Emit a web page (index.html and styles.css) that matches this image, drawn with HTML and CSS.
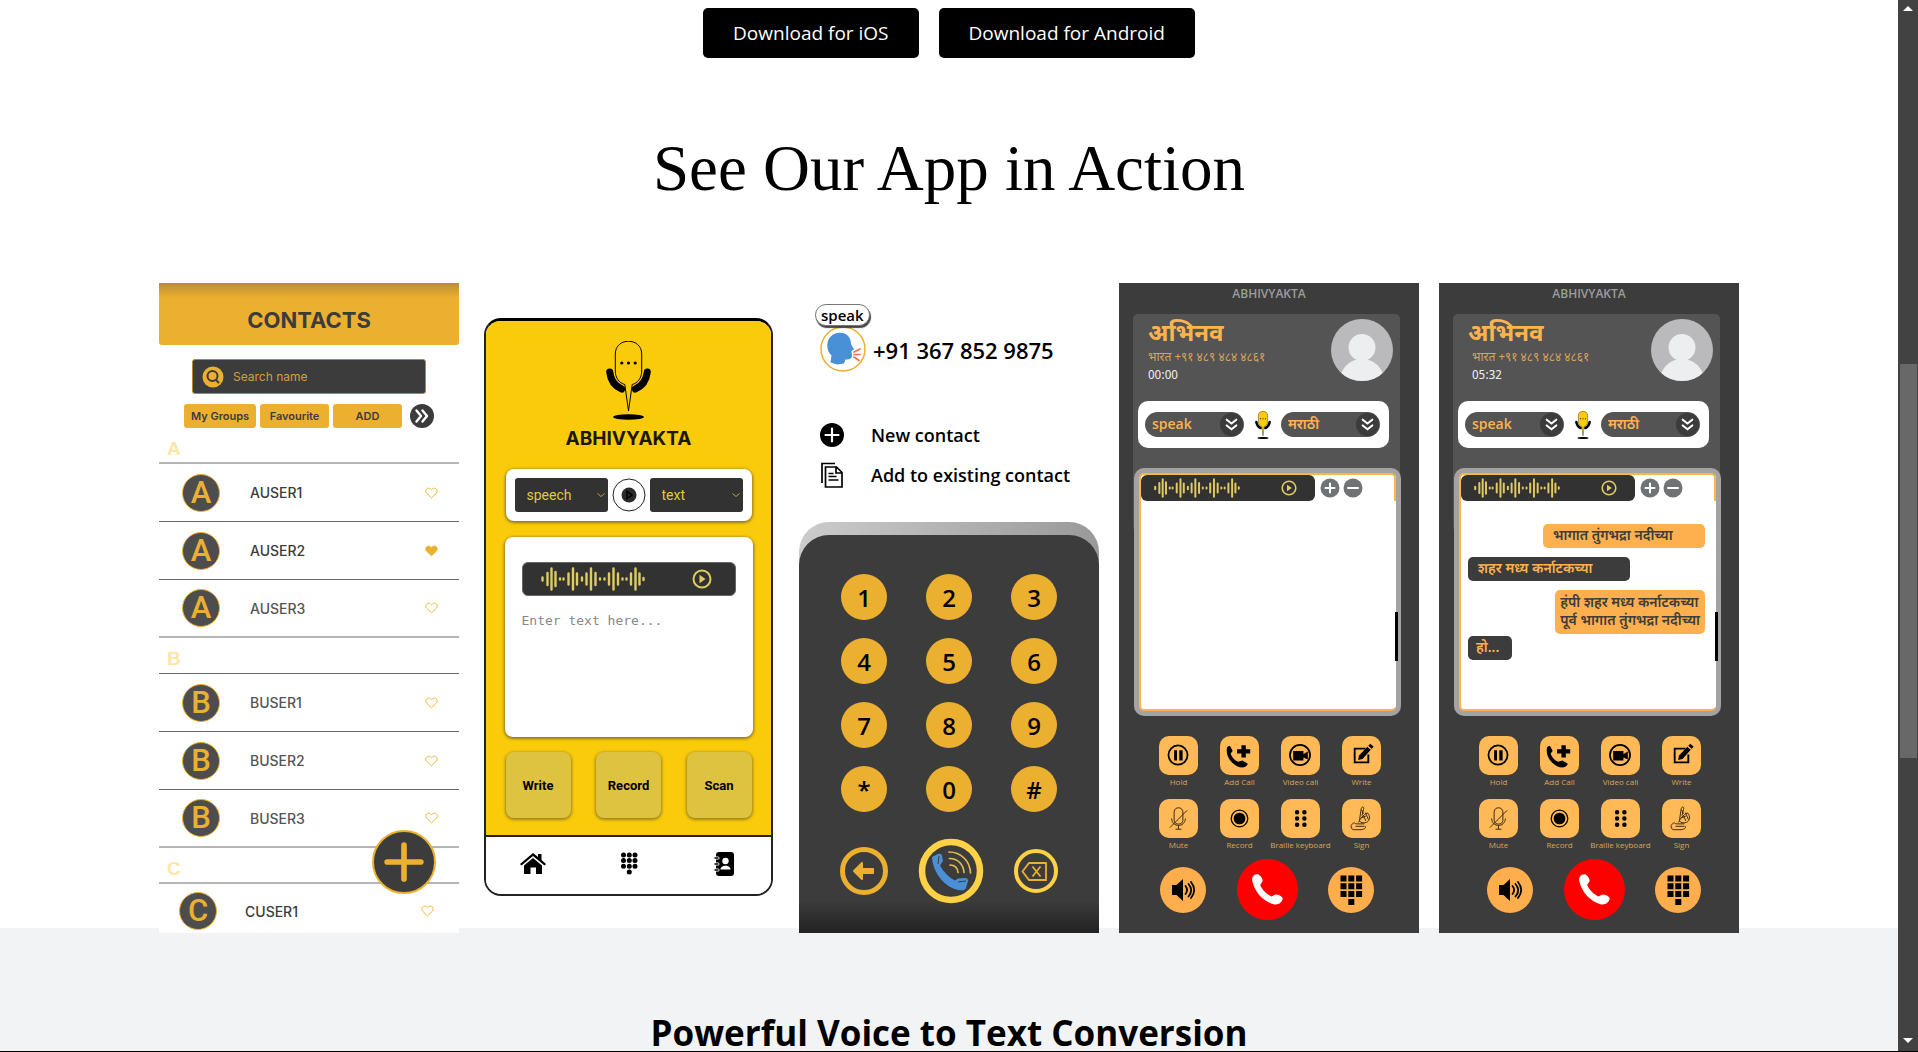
FILE: index.html
```html
<!DOCTYPE html>
<html lang="en">
<head>
<meta charset="utf-8">
<meta name="viewport" content="width=device-width, initial-scale=1">
<title>Abhivyakta</title>
<link rel="stylesheet" href="styles.css">
</head>
<body>
<svg class="sprite" aria-hidden="true">
  <symbol id="wave" viewBox="0 0 104 24"><path fill="none" stroke="currentColor" stroke-width="2.4" stroke-linecap="round" d="M1.5 10.500v3M6.500 6v12M10.500 1.500v21M14.500 5v14M19 11.500v1M22.500 11.500v1M27.500 6.500v11M32 1.500v21M36 6.500v11M41 10.500v3M45.500 6.500v11M50 1.500v21M54.500 6v12M59 11.500v1M63.500 11.500v1M68 6.500v11M72.500 1.500v21M77 6.500v11M81.500 11.500v1M85.500 11.500v1M90 6.500v11M94.500 1.500v21M98.500 6.500v11M102.500 11v2"/></symbol>
  <symbol id="play" viewBox="0 0 20 20"><circle cx="10" cy="10" r="8.500" fill="none" stroke="currentColor" stroke-width="2"/><path fill="currentColor" d="M7.500 5.800v8.400l6-4.200z"/></symbol>
  <symbol id="heart" viewBox="0 0 14 12"><path stroke="#ecb030" d="M7 11.200 1.600 6C-.8 3 2.700-.8 5.800 1.400L7 2.500l1.200-1.100C11.300-.8 14.800 3 12.400 6z"/></symbol>
  <symbol id="mic" viewBox="0 0 45 79"><path fill="none" stroke="#000" stroke-width="7" stroke-linecap="round" d="M3.700 31c1 9 5 14 12 17M41.300 31c-1 9-5 14-12 17"/><path fill="#facb0b" stroke="#000" stroke-width="1" d="M9.300 13C9.300-4 35.700-4 35.700 13V30c0 7-4 12-9.500 13.500L22.500 70 18.800 43.500C13.300 42 9.300 37 9.300 30z"/><ellipse cx="22.500" cy="76" rx="15.500" ry="2.800"/><circle cx="15.800" cy="22" r="1.600"/><circle cx="22.500" cy="22" r="1.600"/><circle cx="29.200" cy="22" r="1.600"/></symbol>
  <symbol id="chevs" viewBox="0 0 24 24"><circle cx="12" cy="12" r="12" fill="#3c3c3c"/><path fill="none" stroke="#fff" stroke-width="2.200" stroke-linecap="round" stroke-linejoin="round" d="M7 7l5 4 5-4M7 13l5 4 5-4"/></symbol>
  <symbol id="pause" viewBox="0 0 40 40"><circle cx="19.500" cy="19.500" r="9.800" fill="none" stroke="#000" stroke-width="1.800"/><path d="M15.500 14.500h3v10.500h-3zM20.800 14.500h3.400v10.500h-3.400z"/></symbol>
  <symbol id="addcall" viewBox="0 0 40 40"><path d="M7 13c0-2 2-3 3.500-2.500l2.500 5-2 2.500c1 4 4.500 7.500 8 8.500l4-1.500 5.500 3.500c-1.500 4-6 5-11 2.500C10.500 27.500 6 20 7 13z"/><path d="M22 9.500h4.500v4H31v4.500h-4.500v4H22v-4h-4.500v-4.500H22z"/></symbol>
  <symbol id="video" viewBox="0 0 40 40"><circle cx="19.500" cy="19.500" r="10.300" fill="none" stroke="#000" stroke-width="1.800"/><path d="M12.500 15.500h10.500v3l4.500-2.500v8l-4.500-2v3H12.500z"/></symbol>
  <symbol id="write" viewBox="0 0 40 40"><path fill="none" stroke="#000" stroke-width="1.900" d="M24 13H13v14h14v-8"/><path d="M16.500 24.500l1-4.500L26 11l3.500 3-8.500 9.500zM27 10l2-2 3.500 3-2 2z"/></symbol>
  <symbol id="mute" viewBox="0 0 40 40"><path fill="none" stroke="#3a2c14" stroke-width="1" d="M15.500 22V13.500c0-6 9-6 9 0V22c0 5-9 5-9 0zM13 20c0 9.500 14 9.500 14 0M20 27v4M17 31h6M11 29.500L29 11.500"/></symbol>
  <symbol id="record" viewBox="0 0 40 40"><circle cx="20" cy="20" r="8.500" fill="none" stroke="#000" stroke-width="1.300"/><circle cx="20" cy="20" r="6"/></symbol>
  <symbol id="braille" viewBox="0 0 40 40"><path fill="none" stroke="#000" stroke-width="4.600" stroke-linecap="round" d="M16.500 13.500v.01M24 13.500v.01M16.500 20v.01M24 20v.01M16.500 26.500v.01M24 26.500v.01"/></symbol>
  <symbol id="sign" viewBox="0 0 40 40"><path fill="none" stroke="#3a2c14" stroke-width="1" stroke-linejoin="round" d="M23 25.500H14c-1-2-3-1-4.500 1.500-.5 2 .5 4 2 4.500h8c3.500 0 5-2 4.500-3.500M14 28h9M18 21.500l1.500-10.500c.500-4 3.500-3.500 2.500 0L20.500 17M17 24l2-4 4-4c2-2 4-2 4.500 0 1.500 3 .5 7-2.500 8-3 1-6 .5-7-1.500M22 17l2.500 5.500M19.500 19.500l5-2M24 14l3 7M20 11l2 4"/></symbol>
  <symbol id="speaker" viewBox="0 0 46 46"><path d="M12 18h4.500l6.500-6v22l-6.500-6H12z"/><path fill="none" stroke="#000" stroke-width="1.800" stroke-linecap="round" d="M25.500 19c2 2.500 2 5.500 0 8M28.500 17c3.500 4 3.500 8.500 0 12.500M31 15c4 5 4 11 0 16"/></symbol>
  <symbol id="phone" viewBox="0 0 62 62"><path fill="#fff" d="M16 24c-2-5 1-9 5-8.500 2 .5 5.500 4 5 7l-2.500 4c2 5 7 9.500 11.500 11.500l4-2c3 0 6.500 1.500 7.500 4-.5 4-4.500 7.500-9.500 6C26.500 43 18.500 34 16 24z"/></symbol>
  <symbol id="pad" viewBox="0 0 46 46"><path d="M12.500 8.500h6v6h-6zM20.300 8.500h6v6h-6zM28.100 8.500h6v6h-6zM12.500 16.300h6v6h-6zM20.300 16.300h6v6h-6zM28.100 16.300h6v6h-6zM12.500 24.100h6v6h-6zM20.300 24.100h6v6h-6zM28.100 24.100h6v6h-6zM20.300 31.900h6v6h-6z"/></symbol>
  <symbol id="avatar" viewBox="0 0 62 62"><clipPath id="disc"><circle cx="31" cy="31" r="31"/></clipPath><circle cx="31" cy="31" r="31" fill="#bababc"/><g fill="#edeef0" clip-path="url(#disc)"><circle cx="31" cy="28.500" r="13.500"/><ellipse cx="31" cy="61" rx="22" ry="21"/></g></symbol>
  <symbol id="plusdot" viewBox="0 0 20 20"><circle cx="10" cy="10" r="9.500" fill="#717274"/><path stroke="#fff" stroke-width="2" stroke-linecap="round" d="M10 5.500v9M5.500 10h9"/></symbol>
  <symbol id="minusdot" viewBox="0 0 20 20"><circle cx="10" cy="10" r="9.500" fill="#717274"/><path stroke="#fff" stroke-width="2" stroke-linecap="round" d="M5 10h10"/></symbol>
</svg>

<div class="window">
<main class="page">
  <section class="downloads">
    <a class="download" href="#ios">Download for iOS</a>
    <a class="download" href="#android">Download for Android</a>
  </section>

  <section class="showcase">
    <h1 class="showcase-title">See Our App in Action</h1>
    <div class="phones">

      <article class="phone contacts">
        <h2 class="contacts-head">CONTACTS</h2>
        <label class="search">
          <svg class="search-icon" viewBox="0 0 22 22"><circle cx="11" cy="11" r="10.500" fill="#ecb030"/><circle cx="10.500" cy="10" r="5" fill="none" stroke="#3c3c3c" stroke-width="2"/><path stroke="#3c3c3c" stroke-width="2" stroke-linecap="round" d="M14 14l2.500 2.500"/></svg>
          <input class="search-input" type="text" placeholder="Search name" aria-label="Search name">
        </label>
        <div class="tabs">
          <button class="tab">My Groups</button><button class="tab">Favourite</button><button class="tab">ADD</button>
          <button class="more" aria-label="More"><svg viewBox="0 0 24 24"><circle cx="12" cy="12" r="12" fill="#3c3c3c"/><path fill="none" stroke="#fff" stroke-width="2.400" stroke-linecap="round" stroke-linejoin="round" d="M6.500 6.500l4.500 5.500-4.500 5.500M12.500 6.500l4.500 5.500-4.500 5.500"/></svg></button>
        </div>
        <h3 class="letter light">A</h3>
        <ul class="people">
          <li class="person"><span class="initial">A</span><span class="name">AUSER1</span><svg class="heart"><use href="#heart"/></svg></li>
          <li class="person"><span class="initial">A</span><span class="name">AUSER2</span><svg class="heart full"><use href="#heart"/></svg></li>
          <li class="person light"><span class="initial">A</span><span class="name soft">AUSER3</span><svg class="heart"><use href="#heart"/></svg></li>
        </ul>
        <h3 class="letter">B</h3>
        <ul class="people">
          <li class="person"><span class="initial">B</span><span class="name soft">BUSER1</span><svg class="heart"><use href="#heart"/></svg></li>
          <li class="person"><span class="initial">B</span><span class="name soft">BUSER2</span><svg class="heart"><use href="#heart"/></svg></li>
          <li class="person light"><span class="initial">B</span><span class="name soft">BUSER3</span><svg class="heart"><use href="#heart"/></svg></li>
        </ul>
        <h3 class="letter light">C</h3>
        <ul class="people last">
          <li class="person"><span class="initial">C</span><span class="name">CUSER1</span><svg class="heart"><use href="#heart"/></svg></li>
        </ul>
        <button class="fab" aria-label="Add contact"><svg viewBox="0 0 64 64"><path stroke="#ecb030" stroke-width="6" stroke-linecap="round" d="M32 14v36M14 32h36"/></svg></button>
      </article>

      <article class="phone home">
        <div class="home-card">
          <div class="home-body">
            <svg class="home-logo"><use href="#mic"/></svg>
            <h2 class="home-name">ABHIVYAKTA</h2>
            <div class="modes">
              <span class="mode"><select class="mode-select" aria-label="From"><option>speech</option></select><svg class="mode-arrow" viewBox="0 0 8 6"><path fill="none" stroke="#b9a43e" d="M.5 1.500l3.500 3 3.500-3"/></svg></span>
              <button class="mode-go" aria-label="Convert"><svg viewBox="0 0 34 34"><circle cx="17" cy="17" r="16" fill="#fff" stroke="#222"/><circle cx="17" cy="17" r="7.500" fill="#2b2b2b"/><path fill="none" stroke="#000" stroke-width="1.500" d="M15 13.500v7l5-3.500z"/></svg></button>
              <span class="mode"><select class="mode-select" aria-label="To"><option>text</option></select><svg class="mode-arrow" viewBox="0 0 8 6"><path fill="none" stroke="#b9a43e" d="M.5 1.500l3.500 3 3.500-3"/></svg></span>
            </div>
            <div class="editor">
              <div class="player"><svg class="player-wave"><use href="#wave"/></svg><svg class="player-play"><use href="#play"/></svg></div>
              <textarea class="editor-text" placeholder="Enter text here..." aria-label="Text"></textarea>
            </div>
            <div class="actions"><button class="action">Write</button><button class="action">Record</button><button class="action">Scan</button></div>
          </div>
          <nav class="home-nav">
            <a href="#home" aria-label="Home"><svg viewBox="0 0 26 24"><path d="M13 1l5 4V2h3.500v6L26 12l-1.500 1.500L13 4 1.500 13.500 0 12z"/><path d="M13 6l9 7.500V22h-6v-6.500h-5.500V22H4v-8.500z"/></svg></a>
            <a href="#dial" aria-label="Dial pad"><svg viewBox="0 0 26 24"><path stroke="#000" stroke-width="5" stroke-linecap="round" d="M7.500 3v.01M13.300 3v.01M19 3v.01M7.500 8.600v.01M13.300 8.600v.01M19 8.600v.01M7.500 14.300v.01M13.300 14.300v.01M19 14.300v.01M13.300 20v.01"/></svg></a>
            <a href="#book" aria-label="Contacts"><svg viewBox="0 0 26 24"><rect x="5" width="18" height="24" rx="3"/><path stroke="#fff" stroke-width="3" stroke-linecap="round" d="M4 6h3M4 12h3M4 18h3"/><path stroke="#000" stroke-width="1.500" stroke-linecap="round" d="M4 6h3M4 12h3M4 18h3"/><circle cx="14.500" cy="9" r="3.200" fill="#fff"/><path fill="#fff" d="M9.500 17.500c0-5 10-5 10 0z"/></svg></a>
          </nav>
        </div>
      </article>

      <article class="phone dialer">
        <div class="dial-top">
          <div class="caller"><span class="face"><svg viewBox="0 0 46 46"><circle cx="23" cy="23" r="22" fill="#fff" stroke="#ecb030" stroke-width="1.500"/><path fill="#4a90d6" d="M17 38.500l-6.500-2 1-7C4 22 7 8 18 7c8-1 13 4 13 11l3 5.500-2.500 1.500.5 5c0 3-4 3.500-6.500 3.500l-1.500 4z"/><path stroke="#ff7043" stroke-width="1.700" stroke-linecap="round" d="M34 26l6-3M34 28.500h6M34 31l5 3.500"/></svg><span class="bubble">speak</span></span><strong class="number">+91 367 852 9875</strong></div>
          <a class="dial-link" href="#new"><svg viewBox="0 0 26 26"><circle cx="13" cy="13" r="12"/><path stroke="#fff" stroke-width="2.200" stroke-linecap="round" d="M13 6.500v13M6.500 13h13"/></svg>New contact</a>
          <a class="dial-link" href="#existing"><svg viewBox="0 0 26 26"><path fill="none" stroke="#000" stroke-width="1.700" d="M3 21V1.500h13M6.500 5h11l5.500 5.500V25H6.500zM17 5v6h6M9.500 11.500h5M9.500 14.500h8M9.500 18h10"/></svg>Add to existing contact</a>
        </div>
        <div class="pad-edge"><div class="pad">
          <div class="keys">
            <button class="key">1</button><button class="key">2</button><button class="key">3</button>
            <button class="key">4</button><button class="key">5</button><button class="key">6</button>
            <button class="key">7</button><button class="key">8</button><button class="key">9</button>
            <button class="key">*</button><button class="key">0</button><button class="key">#</button>
          </div>
          <div class="pad-actions">
            <button class="ring" aria-label="Back"><svg viewBox="0 0 48 48"><circle cx="24" cy="24" r="21.500" fill="none" stroke="#ecb030" stroke-width="5"/><path fill="#ecb030" stroke="#ecb030" stroke-width="2" stroke-linejoin="round" d="M14 24l8-8v6h11v4H22v6z"/></svg></button>
            <button class="ring call" aria-label="Call"><svg viewBox="0 0 66 66"><circle cx="33" cy="33" r="29" fill="none" stroke="#ffd146" stroke-width="6.500"/><path fill="#4a90d6" d="M14 19l6-3c2-.5 4 0 4 2l1 5-3 4.500c4 7 9 12 15 15l3-2 7-.5c2 0 3 1 3 3l-2 7c-1 2.500-4 2.500-7 2C28 50 15 36 14 19z"/><path fill="none" stroke="#3c3c3c" d="M21 18l-1 8M40 44l8-1"/><path fill="none" stroke="#e5bd4b" stroke-width="1.700" stroke-linecap="round" d="M31 14c12 0 21 9 21.500 21M31.500 20.500c8.500 0 14 6 14.500 14M32 27c5 0 7.500 3 8 7.500"/></svg></button>
            <button class="ring erase" aria-label="Erase"><svg viewBox="0 0 44 44"><circle cx="22" cy="22" r="20" fill="none" stroke="#ffd146" stroke-width="4"/><path fill="none" stroke="#ecb030" stroke-width="1.800" d="M8.500 22.500L15 14h17v17H15zM18.500 17.500l8 10M26.500 17.500l-8 10"/></svg></button>
          </div>
        </div></div>
      </article>

      <article class="phone incall">
        <h2 class="incall-name">ABHIVYAKTA</h2>
        <div class="call-panel">
          <header class="who"><div class="who-text" lang="mr"><strong class="who-name">अभिनव</strong><span class="who-number">भारत +९१ ४८९ ४८४ ४८६१</span><time class="who-time">00:00</time></div><svg class="avatar"><use href="#avatar"/></svg></header>
          <div class="langs">
            <span class="lang"><select class="lang-select" aria-label="Mode"><option>speak</option></select><svg class="lang-arrow"><use href="#chevs"/></svg></span>
            <svg class="lang-mic"><use href="#mic"/></svg>
            <span class="lang"><select class="lang-select" aria-label="Language" lang="mr"><option>मराठी</option></select><svg class="lang-arrow"><use href="#chevs"/></svg></span>
          </div>
        </div>
        <div class="screen"><div class="screen-inner">
          <div class="screen-bar"><div class="player small"><svg class="player-wave"><use href="#wave"/></svg><svg class="player-play"><use href="#play"/></svg></div><button class="dot" aria-label="Larger"><svg><use href="#plusdot"/></svg></button><button class="dot" aria-label="Smaller"><svg><use href="#minusdot"/></svg></button></div>
          <i class="thumb"></i>
        </div></div>
        <div class="tools">
          <button class="tool"><svg><use href="#pause"/></svg>Hold</button><button class="tool"><svg><use href="#addcall"/></svg>Add Call</button><button class="tool"><svg><use href="#video"/></svg>Video call</button><button class="tool"><svg><use href="#write"/></svg>Write</button>
          <button class="tool"><svg><use href="#mute"/></svg>Mute</button><button class="tool"><svg><use href="#record"/></svg>Record</button><button class="tool"><svg><use href="#braille"/></svg>Braille keyboard</button><button class="tool"><svg><use href="#sign"/></svg>Sign</button>
        </div>
        <div class="call-row">
          <button class="round" aria-label="Speaker"><svg><use href="#speaker"/></svg></button><button class="round hang" aria-label="Hang up"><svg><use href="#phone"/></svg></button><button class="round" aria-label="Keypad"><svg><use href="#pad"/></svg></button>
        </div>
      </article>

      <article class="phone incall chatting">
        <h2 class="incall-name">ABHIVYAKTA</h2>
        <div class="call-panel">
          <header class="who"><div class="who-text" lang="mr"><strong class="who-name">अभिनव</strong><span class="who-number">भारत +९१ ४८९ ४८४ ४८६१</span><time class="who-time">05:32</time></div><svg class="avatar"><use href="#avatar"/></svg></header>
          <div class="langs">
            <span class="lang"><select class="lang-select" aria-label="Mode"><option>speak</option></select><svg class="lang-arrow"><use href="#chevs"/></svg></span>
            <svg class="lang-mic"><use href="#mic"/></svg>
            <span class="lang"><select class="lang-select" aria-label="Language" lang="mr"><option>मराठी</option></select><svg class="lang-arrow"><use href="#chevs"/></svg></span>
          </div>
        </div>
        <div class="screen"><div class="screen-inner">
          <div class="screen-bar"><div class="player small"><svg class="player-wave"><use href="#wave"/></svg><svg class="player-play"><use href="#play"/></svg></div><button class="dot" aria-label="Larger"><svg><use href="#plusdot"/></svg></button><button class="dot" aria-label="Smaller"><svg><use href="#minusdot"/></svg></button></div>
          <div class="chat" lang="mr">
            <p class="msg mine wide">भागात तुंगभद्रा नदीच्या</p>
            <p class="msg theirs wide">शहर मध्य कर्नाटकच्या</p>
            <p class="msg mine two">हंपी शहर मध्य कर्नाटकच्या<br>पूर्व भागात तुंगभद्रा नदीच्या</p>
            <p class="msg theirs">हो...</p>
          </div>
          <i class="thumb"></i>
        </div></div>
        <div class="tools">
          <button class="tool"><svg><use href="#pause"/></svg>Hold</button><button class="tool"><svg><use href="#addcall"/></svg>Add Call</button><button class="tool"><svg><use href="#video"/></svg>Video call</button><button class="tool"><svg><use href="#write"/></svg>Write</button>
          <button class="tool"><svg><use href="#mute"/></svg>Mute</button><button class="tool"><svg><use href="#record"/></svg>Record</button><button class="tool"><svg><use href="#braille"/></svg>Braille keyboard</button><button class="tool"><svg><use href="#sign"/></svg>Sign</button>
        </div>
        <div class="call-row">
          <button class="round" aria-label="Speaker"><svg><use href="#speaker"/></svg></button><button class="round hang" aria-label="Hang up"><svg><use href="#phone"/></svg></button><button class="round" aria-label="Keypad"><svg><use href="#pad"/></svg></button>
        </div>
      </article>

    </div>
  </section>

  <section class="feature">
    <h2 class="feature-title">Powerful Voice to Text Conversion</h2>
  </section>
</main>
<div class="scrollbar" aria-hidden="true">
  <svg class="scroll-arrow" viewBox="0 0 10 5"><path fill="#fff" d="M0 5L5 0l5 5z"/></svg>
  <div class="scroll-track"><div class="scroll-thumb"></div></div>
  <svg class="scroll-arrow" viewBox="0 0 10 5"><path fill="#fff" d="M0 0l5 5 5-5z"/></svg>
</div>
</div>
</body>
</html>
```

FILE: styles.css
```css
*, *::before, *::after { box-sizing: border-box; }
body, h1, h2, h3, p, ul { margin: 0; padding: 0; }
ul { list-style: none; }
body { font-family: "Open Sans", "Noto Sans", sans-serif; color: #000; background: #fff; }
button { border: 0; padding: 0; background: none; font: inherit; color: inherit; cursor: pointer; }
button svg { display: block; width: 100%; height: 100%; }
a { color: inherit; text-decoration: none; }
input, select, textarea { border: 0; padding: 0; margin: 0; background: none; font: inherit; color: inherit; outline: 0; appearance: none; min-width: 0; }
.sprite { display: block; width: 0; height: 0; }

.window { display: flex; height: 100vh; border-bottom: 1px solid #000; overflow: hidden; }
.page { flex: 1; min-width: 0; overflow: hidden; }

/* browser scrollbar */
.scrollbar { display: flex; flex-direction: column; align-items: center; width: 20px; padding: 6px 0 8px; background: #424242; }
.scroll-arrow { width: 10px; height: 5px; }
.scroll-track { flex: 1; align-self: stretch; padding: 0 1px 0 2px; display: grid; grid-template-rows: 353fr 394fr 280fr; }
.scroll-thumb { grid-row: 2; background: #686868; }

/* page sections */
.downloads { display: flex; justify-content: center; gap: 20px; padding-top: 8px; }
.download { padding: 0 30px; border-radius: 5px; background: #000; color: #fff; font-size: 19px; line-height: 50px; }
.showcase { padding-top: 70px; }
.showcase-title { font: 400 65px/80px "Liberation Serif", serif; text-align: center; }
.phones { display: flex; flex-wrap: wrap; justify-content: center; gap: 20px; margin: 75px 0 -5px; }
.feature { padding: 77px 20px; background: #f2f3f5; }
.feature-title { font-size: 35px; line-height: 56px; font-weight: 700; text-align: center; }

.phone { position: relative; flex: none; width: 300px; height: 650px; overflow: hidden; background: #fff; }

/* contacts */
.contacts { font-family: Inter, sans-serif; color: #3c3c3c; }
.contacts-head { height: 62px; padding-top: 12px; border-radius: 0 0 3px 3px; background: linear-gradient(#b98c35, #ecb030 15px); font-size: 22px; line-height: 50px; text-align: center; }
.search { display: flex; align-items: center; gap: 9px; width: 234px; height: 35px; margin: 14px auto 10px; padding-left: 9px; border: 1px solid #b5862a; border-radius: 3px; background: #3c3c3c; font-size: 12px; color: #d3a03a; }
.search-icon { width: 22px; height: 22px; }
.search-input::placeholder { color: #d3a03a; }
.tabs { display: grid; grid-template-columns: 72px 69px 69px 24px; gap: 4px; width: 250px; margin-left: 25px; }
.tab { height: 24px; border-radius: 3px; background: #ecb030; font-size: 11px; font-weight: 600; }
.more { width: 24px; height: 24px; margin-left: 4px; }
.letter { height: 36px; padding: 6px 0 0 8px; border-bottom: 1px solid #666; font: 700 19px/30px "Liberation Sans", sans-serif; color: #fde6a8; }
.person { display: flex; align-items: center; height: 58px; padding: 0 21px 0 23px; border-bottom: 1px solid #666; }
.light { border-bottom: 2px solid #b5b5b5; }
.initial { width: 38px; height: 38px; border: 1px solid #ecb030; border-radius: 50%; background: #4d4d4d; color: #ecb030; font: 500 31px/36px Roboto, sans-serif; text-align: center; }
.name { flex: 1; margin-left: 30px; font-size: 14px; font-weight: 500; }
.soft { color: #555; }
.heart { width: 13px; height: 12px; fill: none; }
.full { fill: #ecb030; }
.last .person { padding: 0 25px 4px 20px; border: 0; }
.last .name { margin-left: 28px; }
.fab { position: absolute; right: 23px; bottom: 39px; width: 64px; height: 64px; border: 2px solid #ecb030; border-radius: 50%; background: #3c3c3c; }

/* home */
.home { padding: 35px 6px 37px 5px; background: none; font-family: Roboto, sans-serif; }
.home-card { display: flex; flex-direction: column; height: 100%; border: 2px solid #222; border-top: 3px solid #000; border-radius: 17px; overflow: hidden; }
.home-body { flex: 1; display: flex; flex-direction: column; align-items: center; background: #facb0b; }
.home-logo { width: 45px; height: 79px; margin-top: 20px; }
.home-name { margin-top: 7px; font: 700 19px/24px Inter, sans-serif; color: #1c1700; }
.modes { display: flex; align-items: center; gap: 4px; width: 246px; height: 52px; margin-top: 18px; padding: 0 9px; border-radius: 8px; background: #fff; box-shadow: 0 1px 3px 1px #8d7820; }
.mode { position: relative; flex: 1; height: 34px; border-radius: 3px; background: #323232; color: #e0ca3c; }
.mode-select { width: 100%; height: 34px; padding-left: 12px; font-size: 14px; }
.mode-arrow { position: absolute; right: 3px; top: 14px; width: 8px; height: 6px; }
.mode-go { width: 34px; height: 34px; }
.editor { display: flex; flex-direction: column; width: 248px; height: 200px; margin-top: 16px; padding: 25px 17px; border-radius: 8px; background: #fff; box-shadow: 0 1px 3px 1px #8d7820; }
.player { display: flex; align-items: center; justify-content: space-between; height: 34px; padding: 0 23px 0 18px; border: 1px solid #666; border-radius: 6px; background: #323232; color: #dfcb62; }
.player-wave { width: 104px; height: 24px; }
.player-play { width: 20px; height: 20px; }
.editor-text { flex: 1; width: 100%; margin-top: 16px; resize: none; font: 13px/18px "DejaVu Sans Mono", monospace; }
.editor-text::placeholder { color: #888; }
.actions { display: flex; justify-content: space-between; width: 246px; margin-top: 15px; }
.action { width: 65px; height: 66px; border-radius: 8px; background: #dec341; box-shadow: 0 1px 3px 1px #9d841b; font-size: 13px; font-weight: 700; }
.home-nav { display: flex; justify-content: space-between; height: 59px; padding: 15px 34px; border-top: 2px solid #222; background: #fff; }
.home-nav svg { width: 26px; height: 24px; }

/* dialer */
.dialer { display: flex; flex-direction: column; }
.dial-top { height: 239px; padding: 43px 0 0 20px; }
.caller { display: flex; align-items: center; gap: 7px; height: 46px; margin-bottom: 43px; }
.face { position: relative; width: 46px; height: 46px; margin-left: 1px; }
.bubble { position: absolute; left: -5px; bottom: 46px; padding: 0 5px; border: 1px solid #777; border-radius: 11px; background: #fff; box-shadow: 1px 2px 1px #444; font-size: 15px; line-height: 20px; font-weight: 600; }
.number { padding-top: 2px; font-size: 22px; font-weight: 600; }
.dial-link { display: flex; align-items: center; gap: 26px; height: 40px; font-size: 18px; font-weight: 600; white-space: nowrap; }
.dial-link svg { width: 26px; height: 26px; }
.pad-edge { flex: 1; display: flex; padding-top: 13px; border-radius: 30px 30px 0 0; background: linear-gradient(90deg, #ccc, #999); }
.pad { flex: 1; padding: 39px 41px 0 41px; border-radius: 30px 30px 0 0; background: linear-gradient(#3c3c3c 365px, #222); }
.keys { display: grid; grid-template-columns: repeat(3, 46px); justify-content: space-between; gap: 18px 0; padding: 0 1px; }
.key { height: 46px; border-radius: 50%; background: #ecb030; font-size: 24px; font-weight: 600; }
.pad-actions { display: flex; align-items: center; justify-content: space-between; margin-top: 26px; }
.ring { width: 48px; height: 48px; }
.call { width: 66px; height: 66px; }
.erase { width: 44px; height: 44px; }

/* in call */
.incall { background: #3c3c3c; }
.incall-name { height: 31px; color: #9d9d9d; font-size: 12px; line-height: 21px; font-weight: 600; text-align: center; }
.call-panel { height: 218px; margin: 0 19px 0 14px; border-radius: 5px; background: #545454; }
.who { display: flex; justify-content: space-between; height: 87px; padding: 5px 7px 0 15px; }
.who-text { display: flex; flex-direction: column; padding-top: 3px; font-family: "Noto Sans Devanagari", "Noto Sans", sans-serif; }
.who-name { color: #ffb350; font-size: 24px; line-height: 27px; }
.who-number { color: #d9a45c; font-size: 12px; line-height: 18px; }
.who-time { color: #eee; font-size: 12px; line-height: 18px; }
.chatting .who-number, .chatting .who-time { margin-left: 4px; }
.avatar { width: 62px; height: 62px; }
.langs { display: flex; align-items: center; justify-content: space-between; height: 47px; margin: 0 11px 0 5px; padding: 0 9px 0 7px; border-radius: 10px; background: #fff; }
.lang { position: relative; width: 99px; height: 25px; border-radius: 13px; background: #545454; }
.lang-select { width: 100%; height: 22px; padding-left: 7px; color: #ffb350; font-size: 14px; font-weight: 600; }
.lang-arrow { position: absolute; right: 1px; top: 1px; width: 23px; height: 23px; }
.lang-mic { width: 16px; height: 28px; }
.screen { position: relative; height: 248px; margin: -64px 18px 0 15px; padding: 5px; border-radius: 10px; background: #a3a3a3; }
.screen-inner { height: 100%; border: 2px solid #ffb350; border-right: 0; border-radius: 5px; background: #fff; }
.screen-bar { display: flex; align-items: center; gap: 3px; border-right: 2px solid #ffb350; border-radius: 0 4px 0 0; }
.small { width: 174px; height: 26px; margin-right: 2px; padding: 0 18px 0 13px; border: 0; }
.dot { width: 20px; height: 20px; }
.small .player-wave { width: 86px; height: 20px; }
.small .player-play { width: 16px; height: 16px; }
.thumb { position: absolute; right: 3px; top: 144px; width: 3px; height: 49px; background: #000; }
.chat { display: flex; flex-direction: column; align-items: flex-start; padding: 23px 11px 0 7px; font-family: "Noto Sans Devanagari", "Noto Sans", sans-serif; font-size: 14px; line-height: 18px; font-weight: 600; }
.msg { min-width: 44px; padding: 4px 8px 2px; border-radius: 5px; white-space: nowrap; }
.mine { align-self: flex-end; background: #ffb04e; color: #3c3c3c; }
.theirs { background: #3c3c3c; color: #ffb04e; }
.msg.wide { width: 162px; padding-left: 10px; margin-bottom: 9px; }
.msg.two { padding: 5px 5px 3px; margin-bottom: 2px; }
.tools { display: grid; grid-template-columns: repeat(4, 61px); justify-content: center; gap: 11px 0; padding: 20px 0 0 2px; color: #d9a657; font-size: 8px; line-height: 13px; }
.tool { display: flex; flex-direction: column; align-items: center; white-space: nowrap; }
.tool svg { width: 39px; height: 39px; border-radius: 10px; background: #ffb957; }
.call-row { display: flex; align-items: center; justify-content: space-between; margin: 8px 45px 0 41px; }
.chatting .call-row { margin: 8px 38px 0 48px; }
.round { width: 46px; height: 46px; border-radius: 50%; background: #ffad4d; }
.hang { width: 61px; height: 61px; background: #f00; }
```
